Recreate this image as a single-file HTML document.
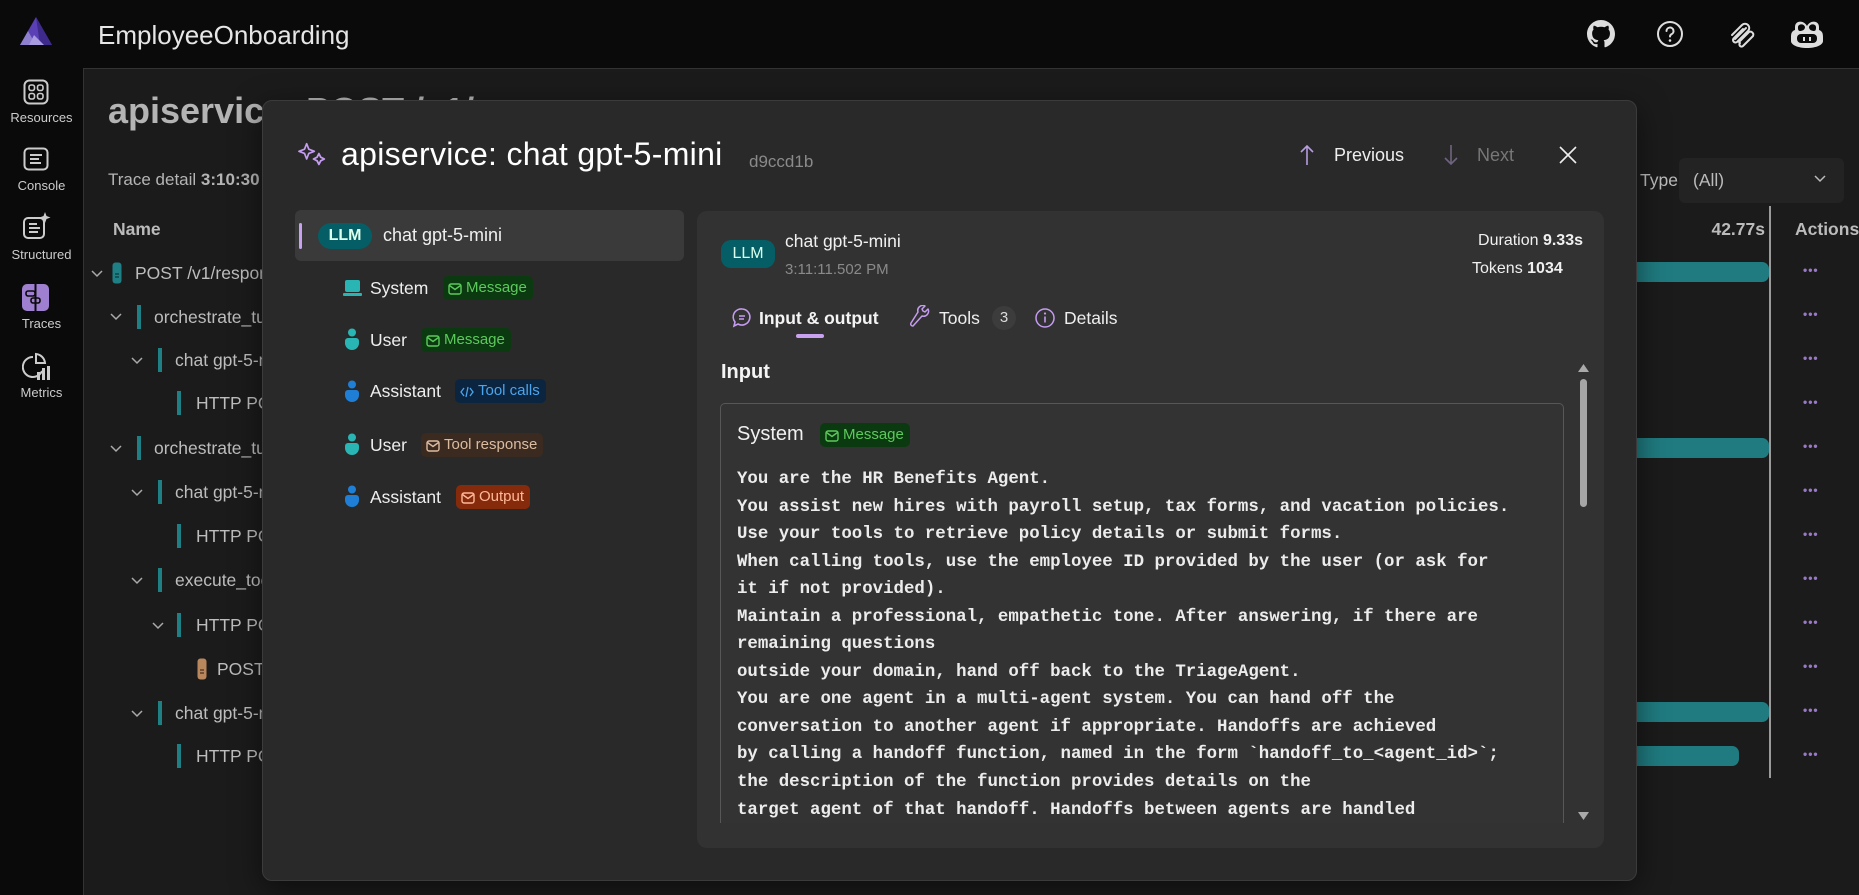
<!DOCTYPE html>
<html><head><meta charset="utf-8"><style>
*{margin:0;padding:0;box-sizing:border-box}
body{width:1859px;height:895px;overflow:hidden;background:#0a0a0a;font-family:"Liberation Sans",sans-serif;color:#ddd;position:relative}
.a{position:absolute;white-space:nowrap}
.main{left:83px;top:68px;width:1776px;height:827px;background:#1b1b1b;border-top:1px solid #333;border-left:1px solid #333}
.nav{width:83px;text-align:center;font-size:13px;color:#ccc;left:0}
.tr{font-size:17.5px;color:#bdbdbd;line-height:20px}
.bar{width:4px;height:24px;background:#1e7f84}
.chev{width:12px;height:8px}
.badge{height:24px;border-radius:5px;font-size:15px;line-height:24px;padding:0 6px 0 5px}
.badge svg{vertical-align:-3px;margin-right:4px}
.dots{left:1803px;color:#9a78c8;font-size:12px;letter-spacing:1px;font-weight:bold}
.tbar{height:20px;background:#1f7b80;border-radius:0 7px 7px 0}
.code{left:737px;font-family:"Liberation Mono",monospace;font-weight:bold;font-size:17.4px;color:#ececec;line-height:27.55px}
</style></head><body>
<svg width="0" height="0" style="position:absolute"><defs><symbol id="cv" viewBox="0 0 12 8"><path d="M1 1l5 5 5-5" fill="none" stroke="#aaa" stroke-width="1.5"/></symbol></defs></svg>
<!-- top bar -->
<svg class="a" style="left:18px;top:16px" width="36" height="30" viewBox="0 0 36 30"><path d="M18 1 L34 29 L2 29 Z" fill="#5b3fb5"/><path d="M18 1 L34 29 L22 29 Z" fill="#3e2a8a"/><path d="M10 15 L2 29 L18 29 Z" fill="#8f7fcf"/><path d="M16 19 L11 29 L26 29 Z" fill="#a99be0"/></svg>
<div class="a" style="left:98px;top:20px;font-size:26px;color:#e6e6e6">EmployeeOnboarding</div>
<svg class="a" style="left:1587px;top:20px" width="28" height="28" viewBox="0 0 16 16"><path fill="#ddd" d="M8 0C3.58 0 0 3.580 0 8c0 3.54 2.29 6.53 5.47 7.590.4.07.55-.17.55-.38 0-.19-.01-.82-.01-1.49-2.010.37-2.53-.49-2.69-.94-.09-.23-.48-.94-.82-1.13-.28-.15-.68-.52-.01-.53.63-.01 1.08.58 1.23.82.72 1.21 1.87.87 2.33.66.07-.52.28-.87.51-1.07-1.78-.2-3.64-.89-3.64-3.95 0-.87.31-1.59.82-2.15-.08-.2-.36-1.02.08-2.12 0 0 .67-.21 2.2.82.64-.18 1.32-.27 2-.27.68 0 1.36.09 2 .27 1.53-1.04 2.2-.82 2.2-.82.44 1.1.16 1.92.08 2.12.51.56.82 1.27.82 2.15 0 3.07-1.87 3.75-3.65 3.950.29.25.54.73.54 1.48 0 1.07-.01 1.93-.01 2.2 0 .21.15.46.55.38A8.013 8.013 0 0016 8c0-4.42-3.58-8-8-8z"/></svg>
<svg class="a" style="left:1656px;top:20px" width="28" height="28" viewBox="0 0 28 28"><circle cx="14" cy="14" r="12" fill="none" stroke="#ddd" stroke-width="2"/><path d="M10.5 11a3.5 3.5 0 1 1 5 3.2c-1 .5-1.5 1.2-1.5 2.3" fill="none" stroke="#ddd" stroke-width="2" stroke-linecap="round"/><circle cx="14" cy="20.5" r="1.3" fill="#ddd"/></svg>
<svg class="a" style="left:1726px;top:20px" width="30" height="30" viewBox="0 0 30 30"><path d="M6 15 L16 5 a4 4 0 0 1 6 6 L11 22 a2.5 2.5 0 0 1-3.5-3.5 L17 9 M9 19 L20 8 M13 22 L23 12 a3 3 0 0 1 4 4 L17 26 a2 2 0 0 1-3-3" fill="none" stroke="#ddd" stroke-width="2" stroke-linecap="round"/></svg>
<svg class="a" style="left:1790px;top:18px" width="34" height="32" viewBox="0 0 34 32"><path d="M17 8c-3-6-12-6-12 1v3c-3 1-4 3-4 7v4c0 4 7 7 16 7s16-3 16-7v-4c0-4-1-6-4-7V9c0-7-9-7-12-1z" fill="#ddd"/><path d="M8 9c0-3 6-4 7 0 0 3-3 4-5 4s-2-2-2-4zM26 9c0-3-6-4-7 0 0 3 3 4 5 4s2-2 2-4z" fill="#0a0a0a"/><rect x="7" y="16" width="20" height="9" rx="4" fill="#0a0a0a"/><rect x="13" y="19" width="2" height="4" fill="#ddd"/><rect x="19" y="19" width="2" height="4" fill="#ddd"/></svg>

<!-- sidebar -->
<svg class="a" style="left:23px;top:79px" width="26" height="26" viewBox="0 0 26 26"><rect x="1.5" y="1.5" width="23" height="23" rx="5" fill="none" stroke="#ccc" stroke-width="2"/><rect x="6" y="6" width="5.5" height="5.5" rx="2" fill="none" stroke="#ccc" stroke-width="1.6"/><rect x="14.5" y="6" width="5.5" height="5.5" rx="2" fill="none" stroke="#ccc" stroke-width="1.6"/><rect x="6" y="14.5" width="5.5" height="5.5" rx="2" fill="none" stroke="#ccc" stroke-width="1.6"/><rect x="14.5" y="14.5" width="5.5" height="5.5" rx="2" fill="none" stroke="#ccc" stroke-width="1.6"/></svg>
<div class="a nav" style="top:110px">Resources</div>
<svg class="a" style="left:23px;top:147px" width="26" height="24" viewBox="0 0 26 24"><rect x="1.5" y="1.5" width="23" height="21" rx="4" fill="none" stroke="#ccc" stroke-width="2"/><path d="M7 8h12M7 12h9M7 16h11" stroke="#ccc" stroke-width="2"/></svg>
<div class="a nav" style="top:178px">Console</div>
<svg class="a" style="left:22px;top:211px" width="30" height="30" viewBox="0 0 30 30"><rect x="2" y="7" width="20" height="20" rx="4" fill="none" stroke="#ccc" stroke-width="2"/><path d="M7 13h8M7 17h11M7 21h9" stroke="#ccc" stroke-width="2"/><path d="M23 1l1.5 4 4 1.5-4 1.5L23 12l-1.5-4-4-1.5 4-1.5z" fill="#ccc"/></svg>
<div class="a nav" style="top:247px">Structured</div>
<svg class="a" style="left:22px;top:284px" width="27" height="27" viewBox="0 0 27 27"><rect x="0" y="0" width="27" height="27" rx="5" fill="#9f7fd0"/><path d="M13.5 0v27" stroke="#0a0a0a" stroke-width="2"/><rect x="4" y="7" width="9" height="5" rx="2" fill="none" stroke="#0a0a0a" stroke-width="1.6"/><rect x="9" y="14" width="9" height="5" rx="2" fill="none" stroke="#0a0a0a" stroke-width="1.6"/></svg>
<div class="a nav" style="top:316px">Traces</div>
<svg class="a" style="left:22px;top:352px" width="28" height="30" viewBox="0 0 28 30"><path d="M11 5a10 10 0 1 0 9 14" fill="none" stroke="#ccc" stroke-width="2"/><path d="M14 2a10 10 0 0 1 9 9h-9z" fill="none" stroke="#ccc" stroke-width="2"/><rect x="15" y="20" width="3" height="8" fill="#ccc"/><rect x="20" y="16" width="3" height="12" fill="#ccc"/><rect x="25" y="14" width="3" height="14" fill="#ccc"/></svg>
<div class="a nav" style="top:385px">Metrics</div>

<!-- main -->
<div class="a main"></div>
<div class="a" style="left:108px;top:90px;font-size:36px;font-weight:bold;color:#b4b4b4">apiservice: POST /v1/responses</div>
<div class="a" style="left:108px;top:170px;font-size:17px;color:#b4b4b4">Trace detail <b>3:10:30 PM</b></div>
<div class="a" style="left:113px;top:219px;font-size:17.5px;font-weight:bold;color:#bbb">Name</div>

<svg class="a chev" style="left:91px;top:270px"><use href="#cv"/></svg>
<svg class="a" style="left:112px;top:262px" width="10" height="22" viewBox="0 0 10 22"><rect x="0.5" y="0.5" width="9" height="21" rx="3" fill="#1e7f84"/><path d="M3 12h4M3 15h4" stroke="#0a3a3c" stroke-width="1.3"/></svg>
<div class="a tr" style="left:135px;top:263px">POST /v1/responses</div>

<svg class="a chev" style="left:110px;top:313px"><use href="#cv"/></svg><div class="a bar" style="left:137px;top:305px"></div><div class="a tr" style="left:154px;top:307px">orchestrate_turn</div>
<svg class="a chev" style="left:131px;top:357px"><use href="#cv"/></svg><div class="a bar" style="left:158px;top:348px"></div><div class="a tr" style="left:175px;top:350px">chat gpt-5-mini</div>
<div class="a bar" style="left:177px;top:391px"></div><div class="a tr" style="left:196px;top:393px">HTTP POST</div>
<svg class="a chev" style="left:110px;top:445px"><use href="#cv"/></svg><div class="a bar" style="left:137px;top:436px"></div><div class="a tr" style="left:154px;top:438px">orchestrate_turn</div>
<svg class="a chev" style="left:131px;top:489px"><use href="#cv"/></svg><div class="a bar" style="left:158px;top:480px"></div><div class="a tr" style="left:175px;top:482px">chat gpt-5-mini</div>
<div class="a bar" style="left:177px;top:524px"></div><div class="a tr" style="left:196px;top:526px">HTTP POST</div>
<svg class="a chev" style="left:131px;top:577px"><use href="#cv"/></svg><div class="a bar" style="left:158px;top:568px"></div><div class="a tr" style="left:175px;top:570px">execute_tool</div>
<svg class="a chev" style="left:152px;top:622px"><use href="#cv"/></svg><div class="a bar" style="left:177px;top:613px"></div><div class="a tr" style="left:196px;top:615px">HTTP POST</div>
<svg class="a" style="left:197px;top:658px" width="10" height="22" viewBox="0 0 10 22"><rect x="0.5" y="0.5" width="9" height="21" rx="3" fill="#b8875c"/><path d="M3 12h4M3 15h4" stroke="#4a3020" stroke-width="1.3"/></svg>
<div class="a tr" style="left:217px;top:659px">POST</div>
<svg class="a chev" style="left:131px;top:710px"><use href="#cv"/></svg><div class="a bar" style="left:158px;top:701px"></div><div class="a tr" style="left:175px;top:703px">chat gpt-5-mini</div>
<div class="a bar" style="left:177px;top:744px"></div><div class="a tr" style="left:196px;top:746px">HTTP POST</div>

<div class="a" style="left:1640px;top:170px;font-size:17.5px;color:#bbb">Type</div>
<div class="a" style="left:1679px;top:158px;width:165px;height:45px;background:#232323;border-radius:6px"></div>
<div class="a" style="left:1693px;top:170px;font-size:17.5px;color:#bbb">(All)</div>
<svg class="a" style="left:1814px;top:175px" width="12" height="8" viewBox="0 0 12 8"><path d="M1 1l5 5 5-5" fill="none" stroke="#bbb" stroke-width="1.5"/></svg>
<div class="a" style="left:1700px;top:219px;width:65px;text-align:right;font-size:17.5px;font-weight:bold;color:#bbb">42.77s</div>
<div class="a" style="left:1795px;top:219px;font-size:17.5px;font-weight:bold;color:#bbb">Actions</div>
<div class="a" style="left:1769px;top:206px;width:2px;height:572px;background:#9a9a9a"></div>
<div class="a tbar" style="left:1600px;top:262px;width:169px"></div>
<div class="a tbar" style="left:1600px;top:438px;width:169px"></div>
<div class="a tbar" style="left:1600px;top:702px;width:169px"></div>
<div class="a tbar" style="left:1600px;top:746px;width:139px"></div>
<div class="a dots" style="top:263px">•••</div><div class="a dots" style="top:307px">•••</div><div class="a dots" style="top:351px">•••</div><div class="a dots" style="top:395px">•••</div><div class="a dots" style="top:439px">•••</div><div class="a dots" style="top:483px">•••</div><div class="a dots" style="top:527px">•••</div><div class="a dots" style="top:571px">•••</div><div class="a dots" style="top:615px">•••</div><div class="a dots" style="top:659px">•••</div><div class="a dots" style="top:703px">•••</div><div class="a dots" style="top:747px">•••</div>

<!-- modal -->
<div class="a" style="left:262px;top:100px;width:1375px;height:781px;background:#292929;border:1px solid #3b3b3b;border-radius:10px;box-shadow:0 8px 30px rgba(0,0,0,.5)"></div>
<svg class="a" style="left:298px;top:142px" width="28" height="26" viewBox="0 0 28 26"><path d="M9 2l2.5 6.5L18 11l-6.5 2.5L9 20l-2.5-6.5L0 11l6.5-2.5z" transform="translate(1 0) scale(.85)" fill="none" stroke="#c49cf0" stroke-width="2" stroke-linejoin="round"/><path d="M21 14l2 4 4 2-4 2-2 4-2-4-4-2 4-2z" transform="translate(2 -1) scale(.9)" fill="none" stroke="#c49cf0" stroke-width="2" stroke-linejoin="round"/></svg>
<div class="a" style="left:341px;top:136px;font-size:32px;color:#fff;letter-spacing:0.3px">apiservice: chat gpt-5-mini</div>
<div class="a" style="left:749px;top:152px;font-size:17px;color:#8a8a8a">d9ccd1b</div>
<svg class="a" style="left:1299px;top:144px" width="16" height="22" viewBox="0 0 16 22"><path d="M8 21V2M2 8l6-6 6 6" fill="none" stroke="#b79ce0" stroke-width="1.6"/></svg>
<div class="a" style="left:1334px;top:145px;font-size:18px;color:#eee">Previous</div>
<svg class="a" style="left:1443px;top:144px" width="16" height="22" viewBox="0 0 16 22"><path d="M8 1v19M2 14l6 6 6-6" fill="none" stroke="#6f6480" stroke-width="1.6"/></svg>
<div class="a" style="left:1477px;top:145px;font-size:18px;color:#777">Next</div>
<svg class="a" style="left:1559px;top:146px" width="18" height="18" viewBox="0 0 18 18"><path d="M1 1l16 16M17 1L1 17" stroke="#eee" stroke-width="1.6"/></svg>

<!-- left list -->
<div class="a" style="left:295px;top:210px;width:389px;height:51px;background:#3a3a3a;border-radius:6px"></div>
<div class="a" style="left:299px;top:223px;width:3px;height:26px;background:#c8a2f0;border-radius:2px"></div>
<div class="a" style="left:318px;top:223px;width:54px;height:26px;background:#055e66;border-radius:13px;font-size:16px;line-height:26px;text-align:center;color:#dfe;font-weight:bold">LLM</div>
<div class="a" style="left:383px;top:225px;font-size:18px;color:#f0f0f0">chat gpt-5-mini</div>

<svg class="a" style="left:343px;top:279px" width="19" height="18" viewBox="0 0 19 18"><rect x="2" y="1" width="15" height="12" rx="2" fill="#2ab5b5"/><rect x="0" y="14" width="19" height="3" rx="1" fill="#2ab5b5"/></svg>
<div class="a" style="left:370px;top:278px;font-size:17.5px;color:#eee">System</div>
<div class="a badge" style="left:443px;top:276px;background:#0c3a10;color:#5cc95c"><svg width="14" height="12" viewBox="0 0 14 12"><rect x="1" y="1" width="12" height="10" rx="2" fill="none" stroke="#5cc95c" stroke-width="1.4"/><path d="M1.5 2.5l5.5 4 5.5-4" fill="none" stroke="#5cc95c" stroke-width="1.4"/></svg>Message</div>

<svg class="a" style="left:345px;top:328px" width="14" height="22" viewBox="0 0 14 22"><circle cx="7" cy="4.5" r="4" fill="#2ab5b5"/><path d="M0 13a3 3 0 0 1 3-3h8a3 3 0 0 1 3 3v2a6 6 0 0 1-14 0z" fill="#2ab5b5"/></svg>
<div class="a" style="left:370px;top:330px;font-size:17.5px;color:#eee">User</div>
<div class="a badge" style="left:421px;top:328px;background:#0c3a10;color:#5cc95c"><svg width="14" height="12" viewBox="0 0 14 12"><rect x="1" y="1" width="12" height="10" rx="2" fill="none" stroke="#5cc95c" stroke-width="1.4"/><path d="M1.5 2.5l5.5 4 5.5-4" fill="none" stroke="#5cc95c" stroke-width="1.4"/></svg>Message</div>

<svg class="a" style="left:345px;top:380px" width="14" height="22" viewBox="0 0 14 22"><circle cx="7" cy="4.5" r="4" fill="#1f7fd6"/><path d="M0 13a3 3 0 0 1 3-3h8a3 3 0 0 1 3 3v2a6 6 0 0 1-14 0z" fill="#1f7fd6"/></svg>
<div class="a" style="left:370px;top:381px;font-size:17.5px;color:#eee">Assistant</div>
<div class="a badge" style="left:455px;top:379px;background:#0b2540;color:#4ca4ec"><svg width="14" height="12" viewBox="0 0 14 12"><path d="M4 2L1 6l3 4M10 2l3 4-3 4M8 1L6 11" fill="none" stroke="#4ca4ec" stroke-width="1.3"/></svg>Tool calls</div>

<svg class="a" style="left:345px;top:433px" width="14" height="22" viewBox="0 0 14 22"><circle cx="7" cy="4.5" r="4" fill="#2ab5b5"/><path d="M0 13a3 3 0 0 1 3-3h8a3 3 0 0 1 3 3v2a6 6 0 0 1-14 0z" fill="#2ab5b5"/></svg>
<div class="a" style="left:370px;top:435px;font-size:17.5px;color:#eee">User</div>
<div class="a badge" style="left:421px;top:433px;background:#3a2a20;color:#dcbca0"><svg width="14" height="12" viewBox="0 0 14 12"><rect x="1" y="1" width="12" height="10" rx="2" fill="none" stroke="#dcbca0" stroke-width="1.4"/><path d="M1.5 2.5l5.5 4 5.5-4" fill="none" stroke="#dcbca0" stroke-width="1.4"/></svg>Tool response</div>

<svg class="a" style="left:345px;top:485px" width="14" height="22" viewBox="0 0 14 22"><circle cx="7" cy="4.5" r="4" fill="#1f7fd6"/><path d="M0 13a3 3 0 0 1 3-3h8a3 3 0 0 1 3 3v2a6 6 0 0 1-14 0z" fill="#1f7fd6"/></svg>
<div class="a" style="left:370px;top:487px;font-size:17.5px;color:#eee">Assistant</div>
<div class="a badge" style="left:456px;top:485px;background:#862a0c;color:#ffb898"><svg width="14" height="12" viewBox="0 0 14 12"><rect x="1" y="1" width="12" height="10" rx="2" fill="none" stroke="#ffb898" stroke-width="1.4"/><path d="M1.5 2.5l5.5 4 5.5-4" fill="none" stroke="#ffb898" stroke-width="1.4"/></svg>Output</div>

<!-- right panel -->
<div class="a" style="left:697px;top:211px;width:907px;height:637px;background:#323232;border-radius:10px;overflow:hidden"></div>
<div class="a" style="left:721px;top:240px;width:54px;height:28px;background:#055e66;border-radius:10px;font-size:16px;line-height:28px;text-align:center;color:#dfe">LLM</div>
<div class="a" style="left:785px;top:231px;font-size:17.5px;color:#f0f0f0">chat gpt-5-mini</div>
<div class="a" style="left:785px;top:261px;font-size:15px;color:#8a8a8a">3:11:11.502 PM</div>
<div class="a" style="left:1400px;top:232px;width:183px;text-align:right;font-size:16px;color:#f0f0f0">Duration <b>9.33s</b></div>
<div class="a" style="left:1472px;top:260px;font-size:16px;color:#f0f0f0">Tokens <b>1034</b></div>

<svg class="a" style="left:732px;top:307px" width="20" height="22" viewBox="0 0 20 22"><path d="M10 2a8 8 0 1 1-4 15l-4 2 1-4A8 8 0 0 1 10 2z" fill="none" stroke="#c49cf0" stroke-width="1.6"/><path d="M7 9h6M7 12h5" stroke="#c49cf0" stroke-width="1.5"/></svg>
<div class="a" style="left:759px;top:308px;font-size:17.5px;font-weight:bold;color:#f4f4f4">Input &amp; output</div>
<div class="a" style="left:796px;top:334px;width:28px;height:4px;background:#c8a2f0;border-radius:2px"></div>
<svg class="a" style="left:910px;top:305px" width="22" height="24" viewBox="0 0 22 24"><path d="M3 21l9-10a5 5 0 0 0 6-7l-3 3-2-1-1-2 3-3a5 5 0 0 0-7 6L1 18a2 2 0 0 0 2 3z" fill="none" stroke="#c49cf0" stroke-width="1.5" stroke-linejoin="round"/></svg>
<div class="a" style="left:939px;top:308px;font-size:17.5px;color:#eee">Tools</div>
<div class="a" style="left:992px;top:306px;width:24px;height:24px;border-radius:12px;background:#3c3c3c;font-size:15px;line-height:24px;text-align:center;color:#ddd">3</div>
<svg class="a" style="left:1034px;top:307px" width="22" height="22" viewBox="0 0 22 22"><circle cx="11" cy="11" r="9" fill="none" stroke="#c49cf0" stroke-width="1.5"/><path d="M11 9.5v6" stroke="#c49cf0" stroke-width="1.6"/><circle cx="11" cy="6.5" r="1.1" fill="#c49cf0"/></svg>
<div class="a" style="left:1064px;top:308px;font-size:17.5px;color:#eee">Details</div>

<div class="a" style="left:721px;top:361px;font-size:20px;font-weight:bold;color:#f4f4f4">Input</div>
<svg class="a" style="left:1578px;top:364px" width="11" height="8" viewBox="0 0 11 8"><path d="M5.5 0L11 8H0z" fill="#aaa"/></svg>
<div class="a" style="left:1580px;top:379px;width:7px;height:128px;background:#a6a6a6;border-radius:4px"></div>
<svg class="a" style="left:1578px;top:812px" width="11" height="8" viewBox="0 0 11 8"><path d="M0 0h11L5.5 8z" fill="#aaa"/></svg>

<div class="a" style="left:720px;top:403px;width:844px;height:420px;border:1px solid #575757;border-bottom:none;border-radius:5px 5px 0 0;background:#333;overflow:hidden">
<div class="a" style="left:16px;top:19px;font-size:20px;color:#f0f0f0">System</div>
<div class="a badge" style="left:99px;top:19px;background:#0c3a10;color:#5cc95c;font-size:15px"><svg width="14" height="12" viewBox="0 0 14 12"><rect x="1" y="1" width="12" height="10" rx="2" fill="none" stroke="#5cc95c" stroke-width="1.4"/><path d="M1.5 2.5l5.5 4 5.5-4" fill="none" stroke="#5cc95c" stroke-width="1.4"/></svg>Message</div>
<div class="a code" style="left:16px;top:62px">You are the HR Benefits Agent.<br>You assist new hires with payroll setup, tax forms, and vacation policies.<br>Use your tools to retrieve policy details or submit forms.<br>When calling tools, use the employee ID provided by the user (or ask for<br>it if not provided).<br>Maintain a professional, empathetic tone. After answering, if there are<br>remaining questions<br>outside your domain, hand off back to the TriageAgent.<br>You are one agent in a multi-agent system. You can hand off the<br>conversation to another agent if appropriate. Handoffs are achieved<br>by calling a handoff function, named in the form `handoff_to_&lt;agent_id&gt;`;<br>the description of the function provides details on the<br>target agent of that handoff. Handoffs between agents are handled</div>
</div>
</body></html>
